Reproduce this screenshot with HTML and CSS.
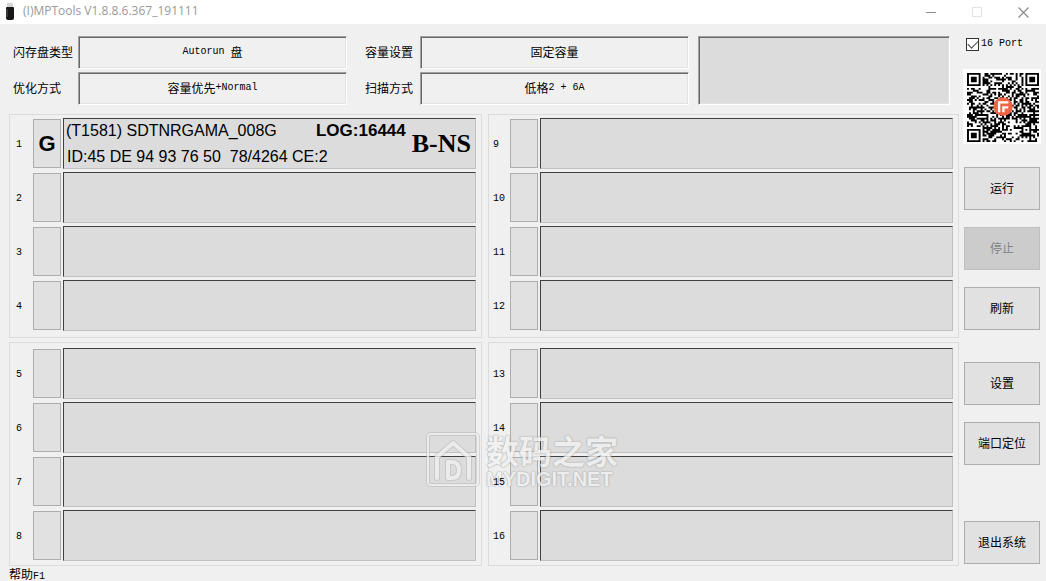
FILE: index.html
```html
<!DOCTYPE html>
<html lang="zh-CN">
<head>
<meta charset="utf-8">
<title>(I)MPTools V1.8.8.6.367_191111</title>
<link rel="stylesheet" href="styles.css">
</head>
<body>
<header class="titlebar">
  <svg class="app-icon" width="10" height="18" viewBox="0 0 10 18" aria-hidden="true">
    <rect x="2" y="0" width="6" height="5" fill="#d4d4d4"/>
    <path d="M1 5q0-1 1-1h6q1 0 1 1v10q0 2-2 2H3q-2 0-2-2z" fill="#191919"/>
    <path d="M2 6v8" stroke="#5a5a5a"/>
  </svg>
  <h1 class="title">(I)MPTools V1.8.8.6.367_191111</h1>
  <button class="win-btn" aria-label="最小化"><svg width="11" height="11"><path d="M0 5.5h10" stroke="#8c8c8c"/></svg></button>
  <button class="win-btn" aria-label="最大化" disabled><svg width="11" height="11"><path d="M.5.5h9v9h-9z" fill="none" stroke="#e2e2e2"/></svg></button>
  <button class="win-btn" aria-label="关闭"><svg width="11" height="11"><path d="M.5.5l10 10M10.500.5l-10 10" stroke="#8c8c8c" stroke-width="1.200"/></svg></button>
</header>

<div class="workspace">
  <main class="main">
    <section class="settings">
      <label class="name" for="type">闪存盘类型</label>
      <output class="field" id="type"><span class="latin">Autorun </span>盘</output>
      <label class="name second" for="capacity">容量设置</label>
      <output class="field" id="capacity">固定容量</output>
      <div class="status"></div>
      <label class="name first" for="mode">优化方式</label>
      <output class="field" id="mode">容量优先<span class="latin">+Normal</span></output>
      <label class="name second" for="scan">扫描方式</label>
      <output class="field" id="scan">低格<span class="latin">2 + 6A</span></output>
    </section>

    <div class="ports">
      <section class="group upper left">
        <div class="port"><span class="num">1</span><button class="drive" aria-label="端口 1">G</button>
          <div class="panel device">
            <div class="row"><span>(T1581) SDTNRGAMA_008G</span><strong class="log">LOG:16444</strong></div>
            <div class="row id">ID:45 DE 94 93 76 50  78/4264 CE:2</div>
            <strong class="grade">B-NS</strong>
          </div></div>
        <div class="port"><span class="num">2</span><button class="drive" aria-label="端口 2"></button><div class="panel"></div></div>
        <div class="port"><span class="num">3</span><button class="drive" aria-label="端口 3"></button><div class="panel"></div></div>
        <div class="port"><span class="num">4</span><button class="drive" aria-label="端口 4"></button><div class="panel"></div></div>
      </section>
      <section class="group upper right">
        <div class="port"><span class="num">9</span><button class="drive" aria-label="端口 9"></button><div class="panel"></div></div>
        <div class="port"><span class="num">10</span><button class="drive" aria-label="端口 10"></button><div class="panel"></div></div>
        <div class="port"><span class="num">11</span><button class="drive" aria-label="端口 11"></button><div class="panel"></div></div>
        <div class="port"><span class="num">12</span><button class="drive" aria-label="端口 12"></button><div class="panel"></div></div>
      </section>
      <section class="group lower left">
        <div class="port"><span class="num">5</span><button class="drive" aria-label="端口 5"></button><div class="panel"></div></div>
        <div class="port"><span class="num">6</span><button class="drive" aria-label="端口 6"></button><div class="panel"></div></div>
        <div class="port"><span class="num">7</span><button class="drive" aria-label="端口 7"></button><div class="panel"></div></div>
        <div class="port"><span class="num">8</span><button class="drive" aria-label="端口 8"></button><div class="panel"></div></div>
      </section>
      <section class="group lower right">
        <div class="port"><span class="num">13</span><button class="drive" aria-label="端口 13"></button><div class="panel"></div></div>
        <div class="port"><span class="num">14</span><button class="drive" aria-label="端口 14"></button><div class="panel"></div></div>
        <div class="port"><span class="num">15</span><button class="drive" aria-label="端口 15"></button><div class="panel"></div></div>
        <div class="port"><span class="num">16</span><button class="drive" aria-label="端口 16"></button><div class="panel"></div></div>
      </section>
    </div>
  </main>

  <aside class="side">
    <label class="ports16"><input type="checkbox" class="check" checked><span class="latin">16 Port</span></label>
    <div class="qr">
      <svg class="qr-code" viewBox="0 0 37 37" preserveAspectRatio="none" role="img" aria-label="二维码">
        <path id="modules" fill="#000"/>
        <circle cx="18.500" cy="18" r="5" fill="#ee6444"/>
        <path d="M16.500 21v-5.300h4.800M18.700 21v-2.600h2.500" fill="none" stroke="#fff" stroke-width="1.200"/>
      </svg>
    </div>
    <button class="cmd">运行</button>
    <button class="cmd" disabled>停止</button>
    <button class="cmd">刷新</button>
    <button class="cmd setup">设置</button>
    <button class="cmd">端口定位</button>
    <button class="cmd exit">退出系统</button>
  </aside>
</div>
<footer class="help">帮助<span class="latin">F1</span></footer>

<div class="watermark">
  <svg width="54" height="56" viewBox="0 0 54 56" aria-hidden="true">
    <g fill="none" stroke-linecap="round" stroke-linejoin="round">
      <g stroke="#b4b4b4" stroke-opacity=".6">
        <rect x="2" y="2" width="50" height="51" rx="3" stroke-width="4"/>
        <path d="M11 46V25L27 11l16 14v21" stroke-width="6"/>
        <path d="M22 30v16h4q7 0 7-8t-7-8z" stroke-width="6"/>
      </g>
      <g stroke="#efefef">
        <rect x="2" y="2" width="50" height="51" rx="3" stroke-width="2"/>
        <path d="M11 46V25L27 11l16 14v21" stroke-width="4"/>
        <path d="M22 30v16h4q7 0 7-8t-7-8z" stroke-width="4"/>
      </g>
    </g>
  </svg>
  <div class="mark-text"><span class="mark-name">数码之家</span><span class="mark-site">MYDIGIT.NET</span></div>
</div>
<script src="qr.js"></script>
</body>
</html>
```

FILE: styles.css
```css
* { box-sizing: border-box; }

body {
  margin: 0;
  min-height: 100vh;
  position: relative;
  overflow: hidden;
  display: flex;
  flex-direction: column;
  background: #f0f0f0;
  color: #000;
  font: 12px/14px "Noto Sans CJK SC", sans-serif;
}

button { font: inherit; color: inherit; padding: 0; }

.latin, .num { font-family: "Liberation Mono", monospace; font-size: 10px; white-space: pre; }

.titlebar {
  display: flex;
  align-items: center;
  height: 24px;
  padding-left: 5px;
  background: #fff;
}
.title {
  flex: 1;
  margin: 0 0 2px 8px;
  color: #999;
  font: 12px/16px "Open Sans", sans-serif;
}
.win-btn {
  display: flex;
  align-items: center;
  justify-content: center;
  width: 46px;
  height: 22px;
  border: 0;
  background: none;
}

.workspace { display: flex; gap: 4px; padding: 12px 5px 0 9px; }
.main { flex: 1; min-width: 0; }

.settings {
  display: grid;
  grid-template-columns: 69px 269fr 73px 269fr 9px 252fr;
  grid-auto-rows: 33px;
  row-gap: 3px;
  padding-right: 9px;
}
.name { align-self: center; padding-left: 4px; padding-bottom: 2px; white-space: nowrap; }
.first { grid-column: 1; }
.second { padding-left: 18px; }
.field, .status {
  border: 1px solid;
  border-color: #a0a0a0 #fff #fff #a0a0a0;
  box-shadow: inset 1px 1px #696969, inset -1px -1px #e3e3e3;
}
.field { display: flex; align-items: center; justify-content: center; padding-bottom: 1px; white-space: pre; }
.status { grid-column: 6; grid-row: 1 / 3; background: #dcdcdc; }

.ports {
  display: grid;
  grid-template-columns: 473fr 471fr;
  gap: 4px 6px;
  margin-top: 9px;
}
.group {
  display: grid;
  gap: 3px;
  border: 1px solid #dcdcdc;
  padding-right: 5px;
}
.upper { padding-top: 3px; padding-bottom: 6px; }
.lower { padding-top: 5px; padding-bottom: 4px; }
.port {
  display: grid;
  column-gap: 2px;
  height: 51px;
}
.left .port { grid-template-columns: 21px 28px 1fr; }
.right .port { grid-template-columns: 19px 28px 1fr; }
.num { position: relative; z-index: 2; align-self: center; padding: 2px 0 0 6px; }
.right .num { padding-left: 4px; }
.drive {
  margin: 1px 0;
  border: 1px solid #adadad;
  background: #e1e1e1;
  font: bold 22px/24px "Liberation Sans", sans-serif;
}
.panel {
  min-width: 0;
  border: 1px solid;
  border-color: #404040 #c0c0c0 #c0c0c0 #404040;
  background: #dcdcdc;
}
.device {
  display: grid;
  grid-template-columns: 1fr auto;
  grid-template-rows: 24px 25px;
  column-gap: 6px;
  padding: 0 4px 0 2px;
  font: 16px/24px "Liberation Sans", sans-serif;
  white-space: pre;
}
.row { display: flex; justify-content: space-between; }
.id { grid-row: 2; padding-left: 1px; line-height: 27px; }
.log { font-size: 17px; }
.grade {
  grid-column: 2;
  grid-row: 1 / 3;
  align-self: center;
  font: bold 26px/30px "Liberation Serif", serif;
}

.side { width: 78px; display: flex; flex-direction: column; }
.ports16 { display: flex; align-items: center; gap: 2px; height: 16px; padding-left: 3px; }
.check {
  appearance: none;
  width: 13px;
  height: 13px;
  margin: 0;
  border: 1px solid #333;
  background: #fff;
  display: grid;
  place-items: center;
}
.check:checked::before {
  content: "";
  width: 9px;
  height: 5px;
  margin-bottom: 3px;
  border: solid #444;
  border-width: 0 0 1px 1px;
  transform: rotate(-45deg);
}
.qr { height: 75px; margin: 17px 0 23px; padding: 4px 2px 2px 4px; background: #fff; }
.qr-code { display: block; width: 100%; height: 100%; }
.cmd {
  height: 43px;
  margin: 0 1px 17px;
  padding-bottom: 1px;
  border: 1px solid #adadad;
  background: #e1e1e1;
}
.cmd:disabled { background: #ccc; border-color: #bfbfbf; color: #838383; }
.setup { margin-top: 15px; }
.exit { margin-top: 39px; margin-bottom: 0; }

.help { padding-left: 9px; margin-top: 1px; }

.watermark {
  position: absolute;
  z-index: 1;
  left: 426px;
  top: 432px;
  display: flex;
  gap: 6px;
  opacity: .8;
  color: #f2f2f2;
  text-shadow: 0 0 2px #999, 0 0 1px #aaa;
  pointer-events: none;
}
.mark-text { display: flex; flex-direction: column; }
.mark-name { font-size: 33px; line-height: 36px; font-weight: bold; }
.mark-site { font: bold 20px/22px "Liberation Sans", sans-serif; }
```

FILE: qr.js
```js
// Fills the 37x37 module grid: finder, timing and alignment patterns plus data.
const SIZE = 37;
let seed = 20191;
const next = () => (seed = (seed * 16807) % 2147483647) / 2147483647;

function square(x, y, left, top, span) {
  const half = (span - 1) / 2;
  const ring = Math.max(Math.abs(x - left - half), Math.abs(y - top - half));
  if (ring > half + (span === 7 ? 1 : 0)) return null;
  return span === 7 ? ring === 3 || ring < 2 : ring !== 1;
}

let d = "";
for (let y = 0; y < SIZE; y++) {
  for (let x = 0; x < SIZE; x++) {
    let on = next() < 0.5;
    if (x === 6 || y === 6) on = (x + y) % 2 === 0;
    for (const [l, t, s] of [[0, 0, 7], [30, 0, 7], [0, 30, 7], [28, 28, 5]]) {
      const fixed = square(x, y, l, t, s);
      if (fixed !== null) on = fixed;
    }
    if (on) d += `M${x} ${y}h1v1h-1z`;
  }
}
document.getElementById("modules").setAttribute("d", d);
```
